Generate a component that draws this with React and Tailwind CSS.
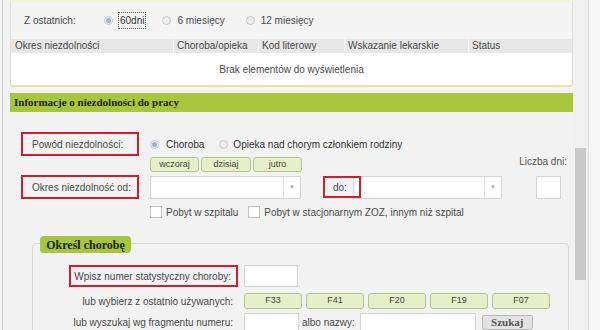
import React from 'react';

const font = { fontFamily: '"Liberation Sans", Arial, sans-serif' };
const serif = { fontFamily: '"Liberation Serif", "Times New Roman", serif' };

function Radio({ checked }) {
  return (
    <span className="inline-flex h-[9px] w-[9px] shrink-0 items-center justify-center rounded-full border border-[#c9c9c9] bg-[#ececec]">
      {checked && <span className="h-[5px] w-[5px] rounded-full bg-[#9fb3cf]" />}
    </span>
  );
}

function Check() {
  return <span className="inline-block h-[12px] w-[12px] shrink-0 border border-[#c4c4c4] bg-white" />;
}

function GreenBtn({ children, w, h = 'h-[16px]' }) {
  return (
    <span className={`flex ${h} ${w} items-center justify-center rounded-[3px] border border-[#b3c58a] bg-[#e6efc7] text-[9px] text-[#444]`}>
      {children}
    </span>
  );
}

function Select({ w }) {
  return (
    <div className={`flex h-[23px] ${w} border border-[#d4d4d4] bg-white`}>
      <div className="flex-1" />
      <div className="flex w-[17px] items-center justify-center border-l border-[#e2e2e2] text-[6px] text-[#aaa]">▼</div>
    </div>
  );
}

function RedBox({ children, className = '' }) {
  return (
    <div className={`flex shrink-0 items-center whitespace-nowrap border-2 border-[#cc1f2f] ${className}`}>{children}</div>
  );
}

export default function App() {
  const cols = [
    ['Okres niezdolności', 'w-[162px] pl-[4px]'],
    ['Choroba/opieka', 'w-[85px]'],
    ['Kod literowy', 'w-[86px]'],
    ['Wskazanie lekarskie', 'w-[124px]'],
    ['Status', 'flex-1'],
  ];
  const codes = ['F33', 'F41', 'F20', 'F19', 'F07'];

  return (
    <div style={font} className="flex h-[330px] w-[600px] overflow-hidden whitespace-nowrap bg-[#f2f2f2] text-[10px] text-[#4a4a4a]">
      <div className="w-[3px] shrink-0 border-r border-[#cfcfcf] bg-[#f7f7f7]" />

      {/* main column */}
      <div className="flex w-[572px] shrink-0 flex-col pl-[7px] pr-[2px]">
        {/* recent list panel */}
        <div className="flex h-[87px] shrink-0 flex-col overflow-hidden rounded-b-[3px] border-x border-b-2 border-x-[#dedede] border-b-[#dfe6a6] border-t-2 border-t-[#f4f6dc] bg-[#f4f4f4]">
          <div className="flex h-[37px] shrink-0 items-center">
            <span className="ml-[13px] w-[80px]">Z ostatnich:</span>
            <span className="flex items-center gap-[5px]">
              <Radio checked />
              <span className="border border-dotted border-[#666] px-[1px] text-[#333]">60dni</span>
            </span>
            <span className="ml-[16px] flex items-center gap-[6px]">
              <Radio />
              <span>6 miesięcy</span>
            </span>
            <span className="ml-[21px] flex items-center gap-[6px]">
              <Radio />
              <span>12 miesięcy</span>
            </span>
          </div>
          <div className="flex h-[14px] shrink-0 items-center bg-[#e7e7e7]">
            {cols.map(([t, c], i) => (
              <span key={t} className={`${c} ${i > 0 ? 'border-l border-[#f7f7f7] pl-[3px]' : ''} leading-[14px]`}>{t}</span>
            ))}
          </div>
          <div className="flex flex-1 items-center justify-center bg-white">Brak elementów do wyświetlenia</div>
        </div>

        {/* section header */}
        <div className="mt-[6px] flex h-[19px] shrink-0 items-center bg-[#a7c63d] pl-[4px] text-[11px] font-bold text-[#1d2410]" style={serif}>
          Informacje o niezdolności do pracy
        </div>

        {/* form body */}
        <div className="flex shrink-0 flex-col pl-[11px]">
          <div className="mt-[20px] flex h-[24px] items-center">
            <RedBox className="h-[24px] w-[118px] pl-[9px]">Powód niezdolności:</RedBox>
            <span className="ml-[11px] flex items-center gap-[7px]">
              <Radio checked />
              <span className="text-[#333]">Choroba</span>
            </span>
            <span className="ml-[15px] flex items-center gap-[5px]">
              <Radio />
              <span className="text-[#333]">Opieka nad chorym członkiem rodziny</span>
            </span>
          </div>

          <div className="flex h-[16px] items-end">
            <div className="ml-[129px] flex gap-[2px]">
              <GreenBtn w="w-[49px]" h="h-[15px]">wczoraj</GreenBtn>
              <GreenBtn w="w-[50px]" h="h-[15px]">dzisiaj</GreenBtn>
              <GreenBtn w="w-[49px]" h="h-[15px]">jutro</GreenBtn>
            </div>
            <span className="mb-[3px] ml-auto mr-[6px] text-[#555]">Liczba dni:</span>
          </div>

          <div className="mt-[3px] flex h-[24px] items-center">
            <RedBox className="h-[24px] w-[118px] pl-[9px]">Okres niezdolność od:</RedBox>
            <div className="ml-[11px]"><Select w="w-[151px]" /></div>
            <RedBox className="relative z-10 ml-[22px] h-[22px] w-[38px] pl-[8px]">do:</RedBox>
            <div className="-ml-[8px]"><Select w="w-[149px]" /></div>
            <div className="ml-[34px] h-[23px] w-[25px] border border-[#d4d4d4] bg-white" />
          </div>

          <div className="mt-[6px] flex h-[14px] items-center">
            <span className="ml-[129px] flex items-center gap-[4px]">
              <Check />
              <span>Pobyt w szpitalu</span>
            </span>
            <span className="ml-[10px] flex items-center gap-[4px]">
              <Check />
              <span>Pobyt w stacjonarnym ZOZ, innym niż szpital</span>
            </span>
          </div>

          {/* fieldset */}
          <div className="relative ml-[11px] mr-[4px] mt-[24px] rounded-t-[5px] border-x border-t border-[#d8d8d8] pb-[10px]">
            <span className="absolute -top-[8px] left-[7px] flex h-[17px] w-[91px] items-center justify-center rounded-[4px] bg-[#a7c63d] text-[12px] font-bold text-[#1d2410]" style={serif}>
              Określ chorobę
            </span>
            <div className="mt-[21px] flex h-[22px] items-center">
              <div className="flex w-[205px] justify-end">
                <RedBox className="h-[22px] w-[169px] justify-end pr-[5px]">Wpisz numer statystyczny choroby:</RedBox>
              </div>
              <div className="ml-[6px] h-[22px] w-[54px] border border-[#d4d4d4] bg-white" />
            </div>
            <div className="mt-[6px] flex h-[16px] items-center">
              <span className="w-[200px] text-right">lub wybierz z ostatnio używanych:</span>
              <div className="ml-[11px] flex gap-[4px]">
                {codes.map((c) => (
                  <GreenBtn key={c} w="w-[58px]">{c}</GreenBtn>
                ))}
              </div>
            </div>
            <div className="mt-[4px] flex h-[18px] items-center">
              <span className="w-[200px] text-right">lub wyszukaj wg fragmentu numeru:</span>
              <div className="ml-[11px] h-[18px] w-[55px] border border-[#d4d4d4] bg-white" />
              <span className="ml-[3px]">albo nazwy:</span>
              <div className="ml-[5px] h-[18px] w-[116px] border border-[#d4d4d4] bg-white" />
              <span className="ml-[6px] flex h-[15px] w-[51px] items-center justify-center rounded-[2px] border border-[#b8b8b8] bg-[#e3e3e3] text-[11px] font-bold text-[#555]" style={serif}>
                Szukaj
              </span>
            </div>
          </div>
        </div>
      </div>

      {/* scrollbar */}
      <div className="flex w-[13px] shrink-0 flex-col bg-[#f0f0f0] pr-[2px]">
        <div className="mt-[148px] h-[132px] w-[11px] bg-[#c9c9c9]" />
      </div>
      <div className="flex-1 border-l border-[#dcdcdc] bg-[#f5f5f5]" />
    </div>
  );
}
